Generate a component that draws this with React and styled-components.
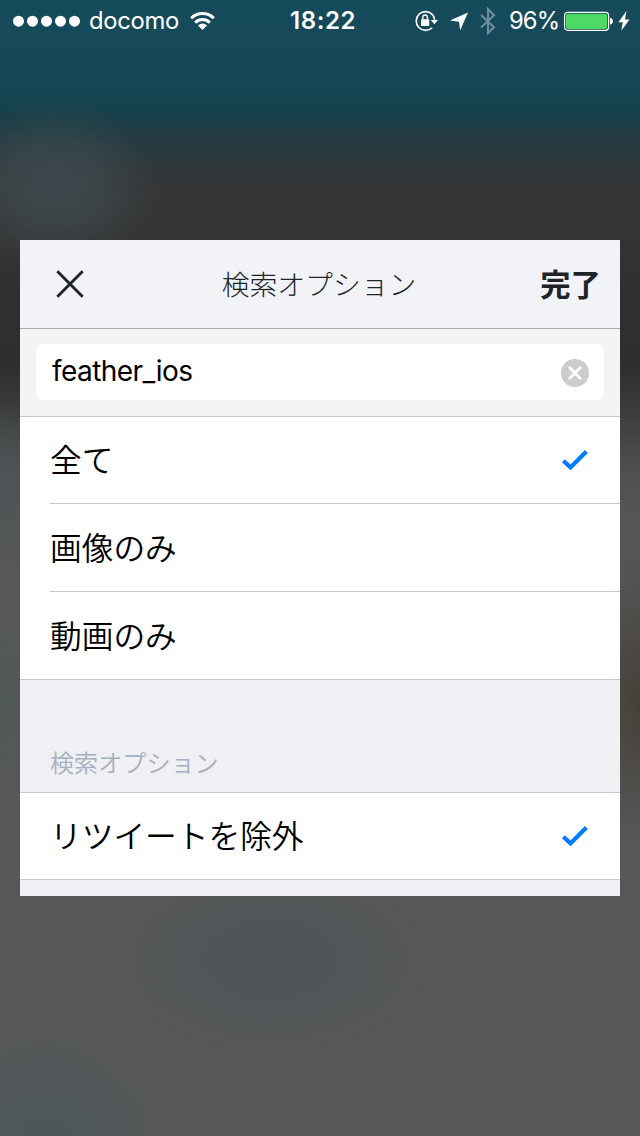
import React from "react";
import styled, { createGlobalStyle } from "styled-components";

const GlobalStyle = createGlobalStyle`
  html, body { margin: 0; padding: 0; }
  body { background: #585858; }
  *, *::before, *::after { box-sizing: border-box; }
`;

const latin = `Inter, "Noto Sans CJK JP", sans-serif`;
const japanese = `"Noto Sans CJK JP", sans-serif`;

const Screen = styled.main`
  width: 640px;
  height: 1136px;
  overflow: hidden;
  display: flex;
  flex-direction: column;
  font-family: ${japanese};
  background:
    radial-gradient(ellipse 110px 90px at 55px 186px, rgba(66, 80, 85, 0.75), rgba(66, 80, 85, 0.5) 45%, rgba(66, 80, 85, 0.1) 85%, rgba(66, 80, 85, 0) 100%),
    radial-gradient(ellipse 130px 130px at 45px 1146px, rgba(74, 86, 89, 0.95), rgba(76, 86, 89, 0.6) 50%, rgba(78, 86, 88, 0) 100%),
    radial-gradient(ellipse 190px 110px at 270px 960px, rgba(79, 84, 87, 0.95), rgba(80, 85, 87, 0.75) 50%, rgba(84, 86, 86, 0) 100%),
    radial-gradient(ellipse 70px 150px at 640px 700px, rgba(66, 61, 53, 0.9), rgba(66, 61, 53, 0) 100%),
    radial-gradient(ellipse 70px 110px at 0px 700px, rgba(76, 89, 87, 0.7), rgba(76, 89, 87, 0) 100%),
    radial-gradient(ellipse 60px 80px at 0px 480px, rgba(76, 86, 90, 0.7), rgba(76, 86, 90, 0) 100%),
    linear-gradient(
      #164b5b 0, #15495a 70px, #154553 95px, #16404b 112px, #1e3c44 128px,
      #263a3f 145px, #2e373a 162px, #343536 185px, #353535 210px, #343434 235px,
      #303131 270px, #2e2e2e 360px, #343534 390px, #424443 430px, #4f5050 475px,
      #555655 530px, #585858 620px, #585858 100%
    );
`;

const StatusBar = styled.header`
  height: 40px;
  flex: none;
  display: grid;
  grid-template-columns: 290px 124px 1fr;
  align-items: center;
  color: #fff;
  font: 400 24px/42px ${latin};
  white-space: nowrap;
`;

const StatusGroup = styled.div`
  display: flex;
  align-items: center;
  height: 40px;
  padding-left: ${(p) => p.$inset || 0}px;
`;

const SignalDots = styled.svg`
  flex: none;
  width: 67px;
  height: 12px;
  margin-right: 9px;
`;

const Carrier = styled.span`
  width: 101px;
  font-size: 23.8px;
  letter-spacing: -0.3px;
`;

const Clock = styled.time`
  font-weight: 600;
  letter-spacing: 0.6px;
`;

const Percent = styled.span`
  width: 55px;
  font-size: 23.8px;
  letter-spacing: -0.9px;
`;

const Glyph = styled.svg`
  flex: none;
  display: block;
  width: ${(p) => p.$w}px;
  height: ${(p) => p.$h}px;
  margin-right: ${(p) => p.$gap || 0}px;
`;

const Dialog = styled.section`
  width: 600px;
  margin: 200px 20px 0;
  display: flex;
  flex-direction: column;
  background: #efeff4;
`;

const DialogHeader = styled.div`
  height: 89px;
  display: grid;
  grid-template-columns: 100px 1fr 100px;
  align-items: center;
  background: #f1f3f7;
  border-bottom: 1px solid #a9abae;
  color: #202328;
`;

const IconButton = styled.button`
  display: flex;
  align-items: center;
  justify-content: center;
  padding: 0;
  border: 0;
  background: none;
  color: #202328;
`;

const Title = styled.h1`
  margin: 0;
  padding: 0 2px 2px 0;
  text-align: center;
  font-size: 27.8px;
  line-height: 86px;
  font-weight: 300;
`;

const DoneButton = styled.button`
  padding: 0 19px 2px 0;
  border: 0;
  background: none;
  color: #202328;
  font: 700 30.4px/86px ${japanese};
  text-align: right;
  white-space: nowrap;
`;

const SearchArea = styled.div`
  height: 88px;
  padding: 15px 16px 16px;
  background: #f4f4f4;
  border-bottom: 1px solid #c8c7cc;
`;

const SearchField = styled.div`
  height: 56px;
  padding: 1px 15px 0 16px;
  display: flex;
  align-items: center;
  justify-content: space-between;
  border-radius: 8px;
  background: #fff;
  color: #000;
  font: 400 28px/53px ${latin};
`;

const Query = styled.span`
  padding-bottom: 2px;
  letter-spacing: -0.55px;
`;

const OptionRow = styled.div`
  height: ${(p) => p.$h || 88}px;
  padding-left: 30px;
  background: #fff;
`;

const OptionBody = styled.div`
  height: 100%;
  display: flex;
  align-items: center;
  justify-content: space-between;
  padding-right: 32px;
  border-bottom: 1px solid #c8c7cc;
`;

const LastOptionRow = styled(OptionRow)`
  padding-left: 0;
  ${OptionBody} { padding-left: 30px; }
`;

const Label = styled.span`
  padding-bottom: 4px;
  font-size: 31.7px;
  line-height: 82px;
  font-weight: 350;
  color: #000;
  white-space: nowrap;
`;

const SectionHeading = styled.h2`
  height: 113px;
  margin: 0;
  padding: 52px 0 0 30px;
  border-bottom: 1px solid #c8c7cc;
  color: #a5b0c0;
  font-size: 24.1px;
  line-height: 60px;
  font-weight: 350;
`;

const DialogFooter = styled.div`
  height: 16px;
`;

const Check = () => (
  <Glyph $w={26} $h={20} viewBox="0 0 26 20" fill="none">
    <path d="M1.4 10.8 8.5 17.4 24.4 1.6" stroke="#007aff" strokeWidth="4.2" />
  </Glyph>
);

const options = [
  { label: "全て", height: 87, checked: true },
  { label: "画像のみ", height: 88 },
];

export default function App() {
  return (
    <>
      <GlobalStyle />
      <Screen>
        <StatusBar>
          <StatusGroup $inset={13}>
            <SignalDots viewBox="0 0 67 12" fill="#fff">
              {[5.5, 19.5, 33.5, 47.5, 61.5].map((x) => (
                <circle key={x} cx={x} cy="6.2" r="5.5" />
              ))}
            </SignalDots>
            <Carrier>docomo</Carrier>
            <Glyph $w={25} $h={20} viewBox="0 0 25 20">
              <g fill="none" stroke="#fff" strokeWidth="3">
                <path d="M1.2 7.2a16 16 0 0 1 22.6 0" />
                <path d="M5.2 11.6a10.3 10.3 0 0 1 14.6 0" />
              </g>
              <path d="M12.5 18.9 8 14.4a6.4 6.4 0 0 1 9 0z" fill="#fff" />
            </Glyph>
          </StatusGroup>
          <Clock>18:22</Clock>
          <StatusGroup>
            <Glyph $w={24} $h={22} $gap={12} viewBox="0 0 24 22">
              <path d="M18.5 4.6A9.4 9.4 0 1 0 18.2 17.7" fill="none" stroke="#fff" strokeWidth="1.6" />
              <path d="M18.5 4.6a9.4 9.4 0 0 1 2 5.2" fill="none" stroke="#fff" strokeWidth="1.6" />
              <path d="M16.8 10h7.2l-3.6 4.2z" fill="#fff" />
              <rect x="7" y="9.2" width="8.2" height="6.8" rx=".6" fill="#fff" />
              <path d="M8.8 9.5V7.3a2.3 2.3 0 0 1 4.6 0v2.2" fill="none" stroke="#fff" strokeWidth="1.4" />
            </Glyph>
            <Glyph $w={18} $h={18} $gap={12} viewBox="0 0 18 18">
              <path d="M18 .5 10.2 18.4 9 9.8 0 8.6z" fill="#fff" />
            </Glyph>
            <Glyph $w={16} $h={28} $gap={13} viewBox="0 0 16 28">
              <path d="M1 7.9 14 20.2 8 26.1V2.2L14 8.2 1 20.4" fill="none" stroke="#6f8e99" strokeWidth="2.1" />
            </Glyph>
            <Percent>96%</Percent>
            <Glyph $w={50} $h={20} $gap={4} viewBox="0 0 50 20">
              <rect x=".6" y="1.3" width="44" height="18" rx="3" fill="none" stroke="#fff" strokeWidth="1.2" />
              <rect x="2" y="2.7" width="41.2" height="15.2" rx="1.8" fill="#4cd964" />
              <path d="M46 7c2 .2 2.9 1.4 2.9 3.3s-.9 3.1-2.9 3.3z" fill="#fff" />
            </Glyph>
            <Glyph $w={12} $h={20} viewBox="0 0 12 20">
              <path d="M8.4 0 .4 11.2h4.4L3.3 19.8 11.5 8.4H7z" fill="#fff" />
            </Glyph>
          </StatusGroup>
        </StatusBar>

        <Dialog>
          <DialogHeader>
            <IconButton aria-label="閉じる">
              <Glyph $w={28} $h={28} viewBox="0 0 28 28" fill="none">
                <path d="M1.3 1.3 26.7 26.7M26.7 1.3 1.3 26.7" stroke="currentColor" strokeWidth="2.9" />
              </Glyph>
            </IconButton>
            <Title>検索オプション</Title>
            <DoneButton>完了</DoneButton>
          </DialogHeader>

          <SearchArea>
            <SearchField>
              <Query>feather_ios</Query>
              <Glyph $w={28} $h={28} viewBox="0 0 28 28">
                <circle cx="14" cy="14" r="14" fill="#ccc" />
                <path d="m8.8 8.8 10.4 10.4m0-10.4L8.8 19.2" stroke="#fff" strokeWidth="2.9" strokeLinecap="round" />
              </Glyph>
            </SearchField>
          </SearchArea>

          {options.map((o) => (
            <OptionRow key={o.label} $h={o.height}>
              <OptionBody>
                <Label>{o.label}</Label>
                {o.checked && <Check />}
              </OptionBody>
            </OptionRow>
          ))}
          <LastOptionRow>
            <OptionBody>
              <Label>動画のみ</Label>
            </OptionBody>
          </LastOptionRow>

          <SectionHeading>検索オプション</SectionHeading>
          <LastOptionRow $h={87}>
            <OptionBody>
              <Label>リツイートを除外</Label>
              <Check />
            </OptionBody>
          </LastOptionRow>
          <DialogFooter />
        </Dialog>
      </Screen>
    </>
  );
}
